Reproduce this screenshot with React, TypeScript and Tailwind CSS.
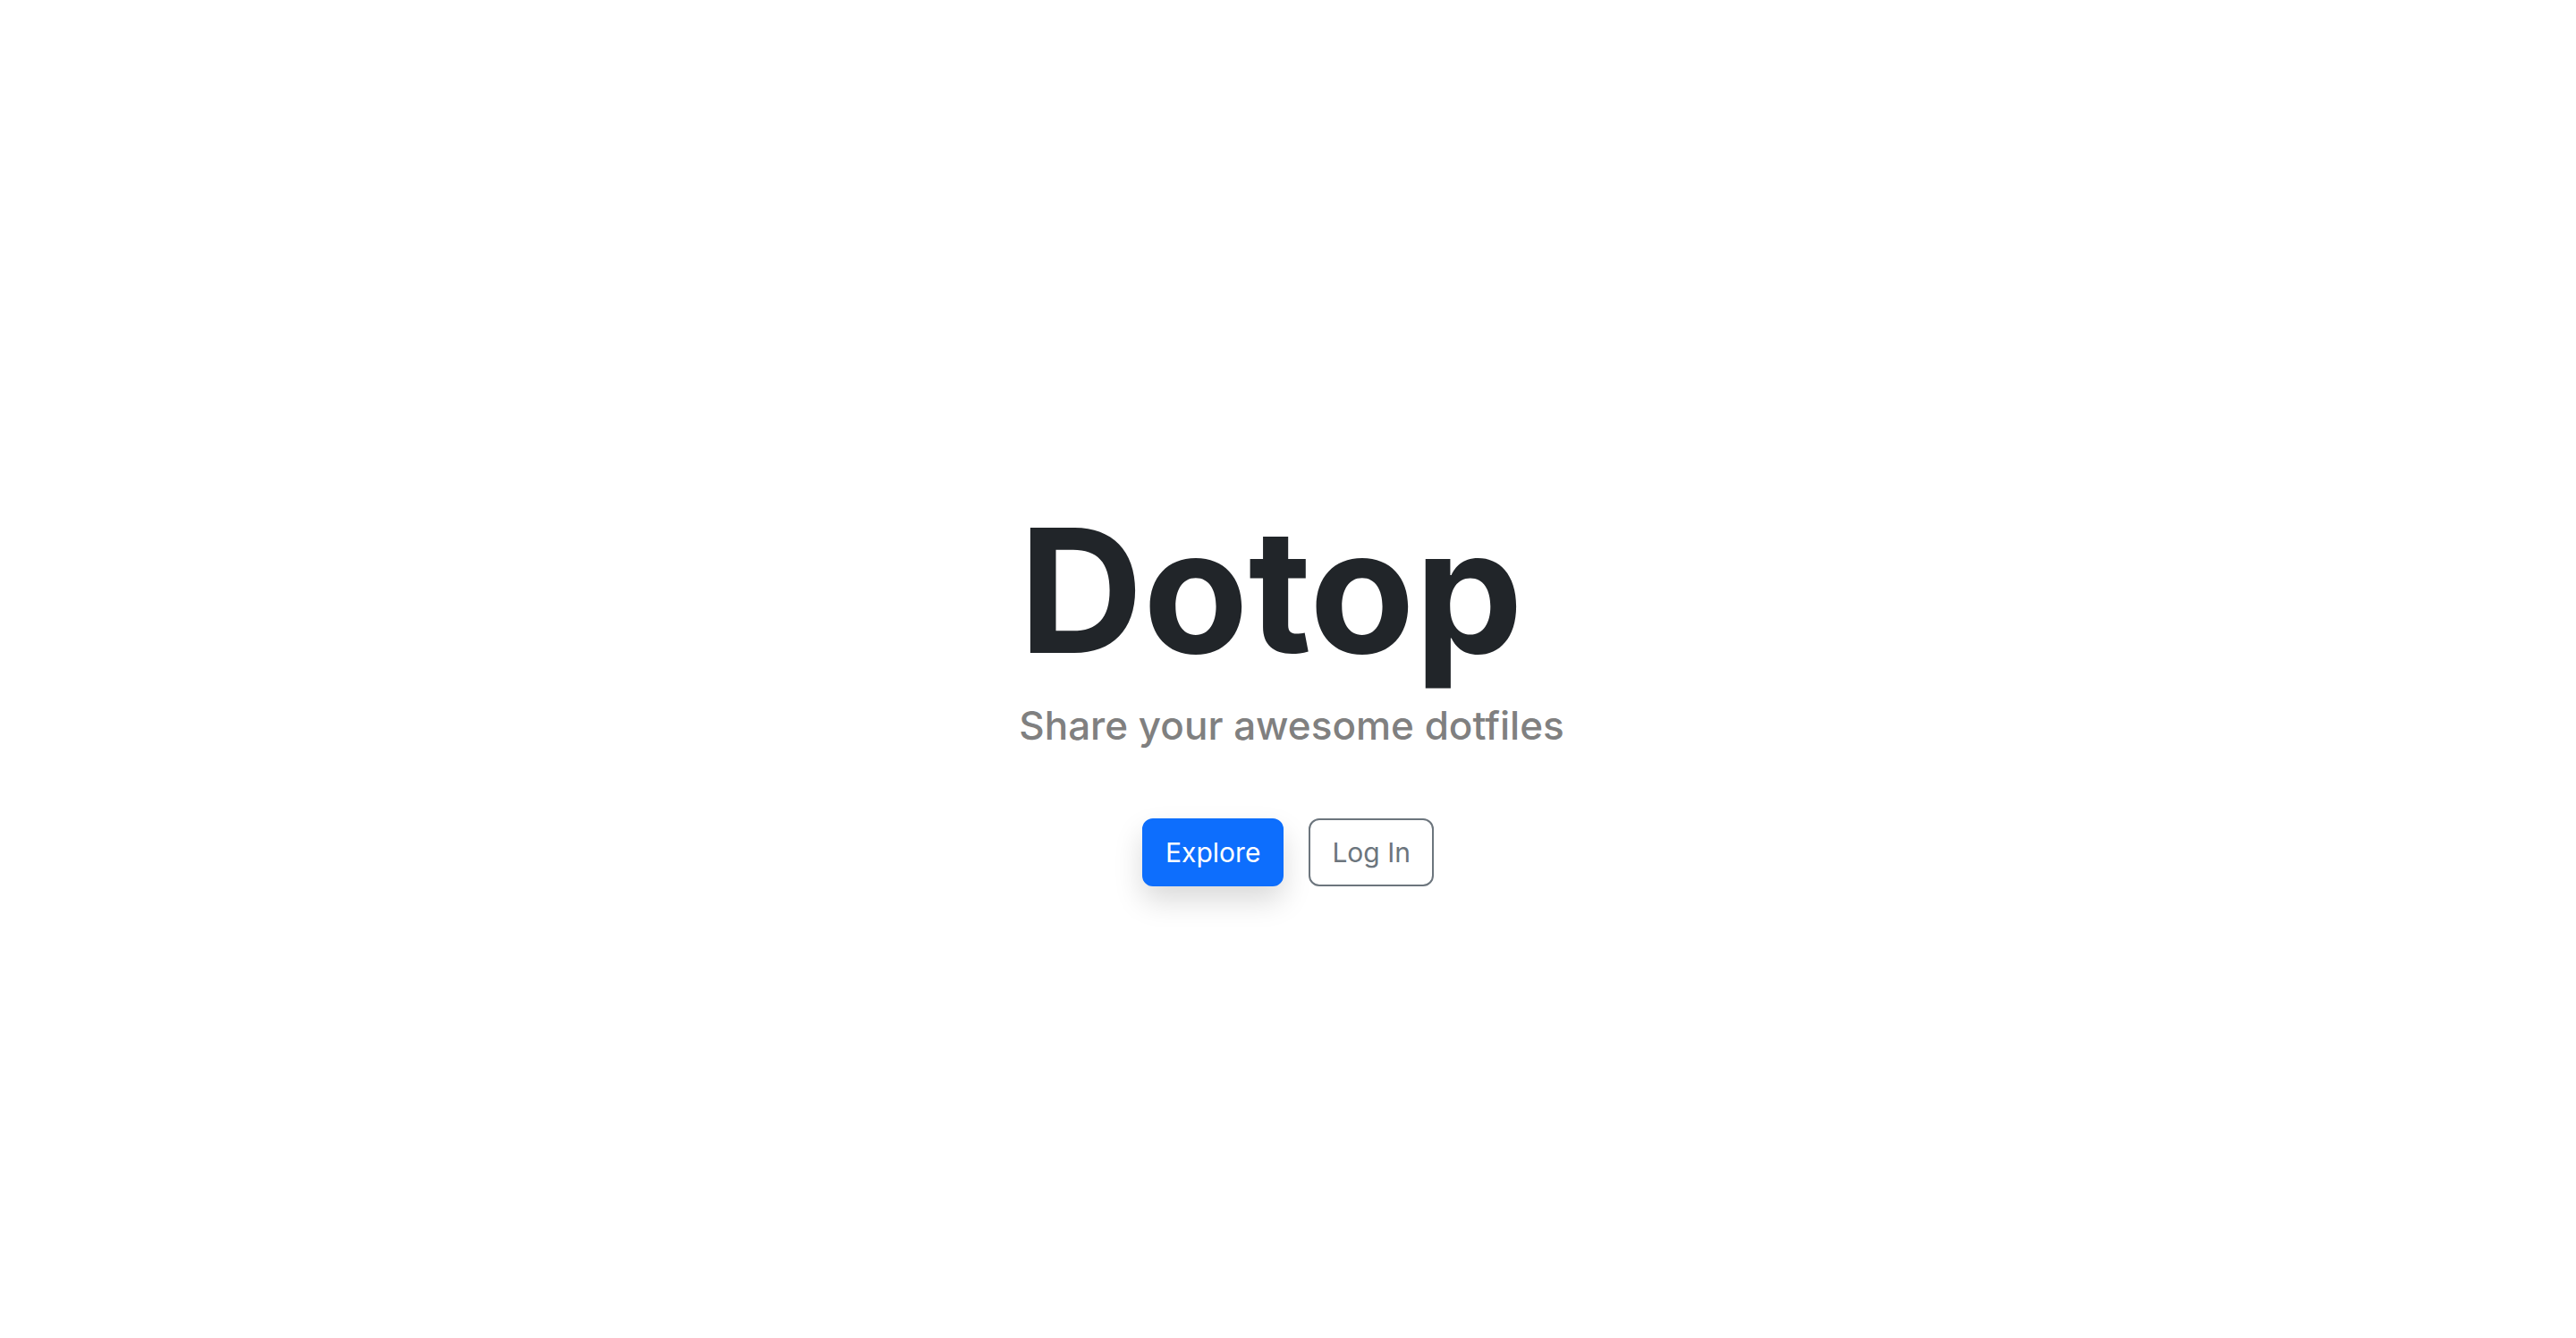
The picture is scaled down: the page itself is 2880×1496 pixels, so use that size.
export default function App() {
  return (
    <main className="flex min-h-screen flex-col items-center justify-center bg-white pt-10 font-['Inter',sans-serif]">
      <div className="flex flex-col items-start pl-2">
        <h1 className="text-[192px] leading-[230px] font-bold text-[#212529]">Dotop</h1>
        <p className="mt-2 text-[44px] leading-[56px] font-medium text-[#808080]">Share your awesome dotfiles</p>
      </div>
      <div className="mt-[76px] flex gap-7">
        <button type="button" className="rounded-xl border-2 border-[#0d6efd] bg-[#0d6efd] px-6 py-3 text-[30px] leading-[48px] text-white shadow-[0_16px_32px_rgba(0,0,0,0.15)]">Explore</button>
        <button type="button" className="rounded-xl border-2 border-[#6c757d] px-6 py-3 text-[30px] leading-[48px] text-[#6c757d]">Log In</button>
      </div>
    </main>
  );
}
